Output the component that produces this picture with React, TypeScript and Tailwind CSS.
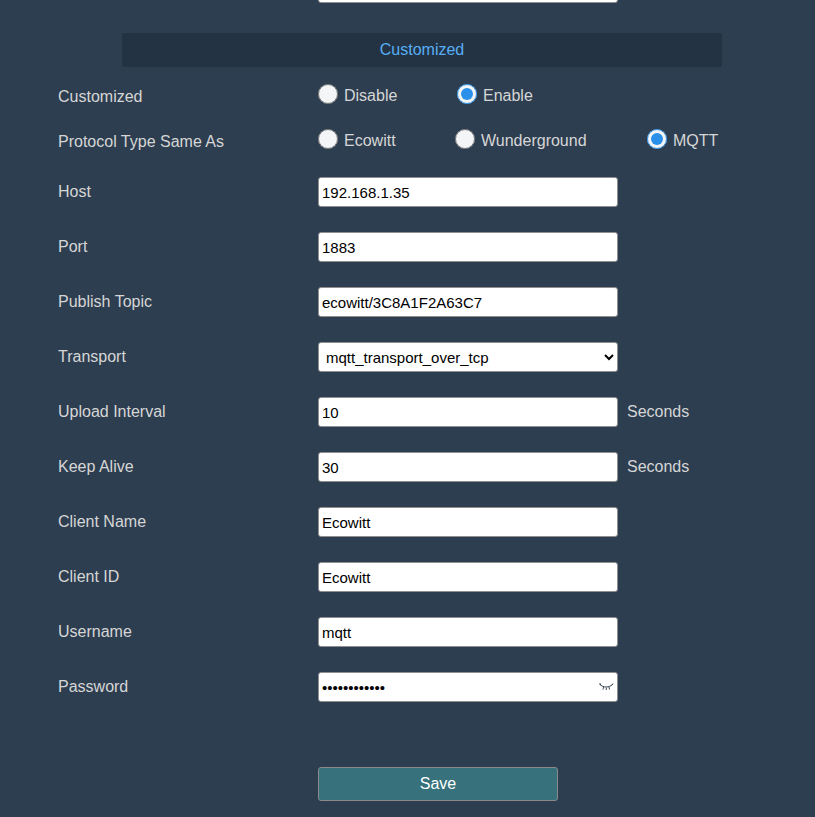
import React from 'react';

const inputCls =
  'w-[300px] h-[30px] rounded-[3px] border border-[#8f8f8f] bg-white px-[3px] text-[15px] text-black outline-none';

const Row = ({ label, children }: { label: string; children: React.ReactNode }) => (
  <div className="flex h-[30px] items-center pl-[58px] mb-[25px]">
    <label className="w-[260px] text-[16px] text-[#d6d6d6]">{label}</label>
    {children}
  </div>
);

const Radio = ({ label, checked, width }: { label: string; checked?: boolean; width: string }) => (
  <label className={`flex items-center text-[16px] text-[#d6d6d6] ${width}`}>
    <input
      type="radio"
      defaultChecked={checked}
      className="m-0 mr-[6px] h-5 w-5 shrink-0 accent-[#2b95f2] opacity-95"
    />
    <span className="pt-[4px]">{label}</span>
  </label>
);

const App = () => {
  return (
    <div className="h-[817px] w-[815px] overflow-hidden bg-[#2d3e50] font-['Liberation_Sans',Arial,sans-serif]">
      <div className="ml-[318px] -mt-[27px]">
        <input className={inputCls} defaultValue="" />
      </div>

      <div className="ml-[122px] mt-[30px] flex h-[34px] w-[600px] items-center justify-center rounded-[2px] bg-[#233343] text-[16px] text-[#58aef5]">
        Customized
      </div>

      <div className="mt-[17px] flex h-[20px] items-center pl-[58px]">
        <div className="w-[260px] translate-y-[3px] text-[16px] text-[#d6d6d6]">Customized</div>
        <div className="flex">
          <Radio label="Disable" width="w-[139px]" />
          <Radio label="Enable" checked width="w-[100px]" />
        </div>
      </div>

      <div className="mt-[25px] flex h-[20px] items-center pl-[58px]">
        <div className="w-[260px] translate-y-[3px] text-[16px] text-[#d6d6d6]">Protocol Type Same As</div>
        <div className="flex">
          <Radio label="Ecowitt" width="w-[137px]" />
          <Radio label="Wunderground" width="w-[192px]" />
          <Radio label="MQTT" checked width="w-[80px]" />
        </div>
      </div>

      <div className="mt-[28px]">
        <Row label="Host">
          <input className={inputCls} defaultValue="192.168.1.35" />
        </Row>
        <Row label="Port">
          <input className={inputCls} defaultValue="1883" />
        </Row>
        <Row label="Publish Topic">
          <input className={inputCls} defaultValue="ecowitt/3C8A1F2A63C7" />
        </Row>
        <Row label="Transport">
          <select className={`${inputCls} appearance-auto`} defaultValue="tcp">
            <option value="tcp">mqtt_transport_over_tcp</option>
          </select>
        </Row>
        <Row label="Upload Interval">
          <input className={inputCls} defaultValue="10" />
          <span className="ml-[9px] text-[16px] text-[#d6d6d6]">Seconds</span>
        </Row>
        <Row label="Keep Alive">
          <input className={inputCls} defaultValue="30" />
          <span className="ml-[9px] text-[16px] text-[#d6d6d6]">Seconds</span>
        </Row>
        <Row label="Client Name">
          <input className={inputCls} defaultValue="Ecowitt" />
        </Row>
        <Row label="Client ID">
          <input className={inputCls} defaultValue="Ecowitt" />
        </Row>
        <Row label="Username">
          <input className={inputCls} defaultValue="mqtt" />
        </Row>
        <Row label="Password">
          <div className="relative h-[30px] w-[300px]">
            <input type="password" className={inputCls} defaultValue="ecowitt12345" />
            {/* closed eye toggle */}
            <svg
              className="absolute right-[4px] top-[10px] h-[10px] w-[15px]"
              viewBox="0 0 15 10"
              fill="none"
              stroke="#3d4a58"
              strokeWidth="1"
            >
              <path d="M0.5 2 C3.5 6 10.5 6 14 2" />
              <path d="M2 3.5 L0.8 1 M4.5 5 L4 7.5 M7.3 5.6 L7.3 8 M10 5 L10.5 7.5 M12.6 3.5 L14 1.5" />
            </svg>
          </div>
        </Row>
      </div>

      <div className="ml-[318px] mt-[65px]">
        <button className="h-[34px] w-[240px] rounded-[3px] border border-[#8a8a8a] bg-[#36717c] text-[16px] text-white">
          Save
        </button>
      </div>
    </div>
  );
};

export default App;
